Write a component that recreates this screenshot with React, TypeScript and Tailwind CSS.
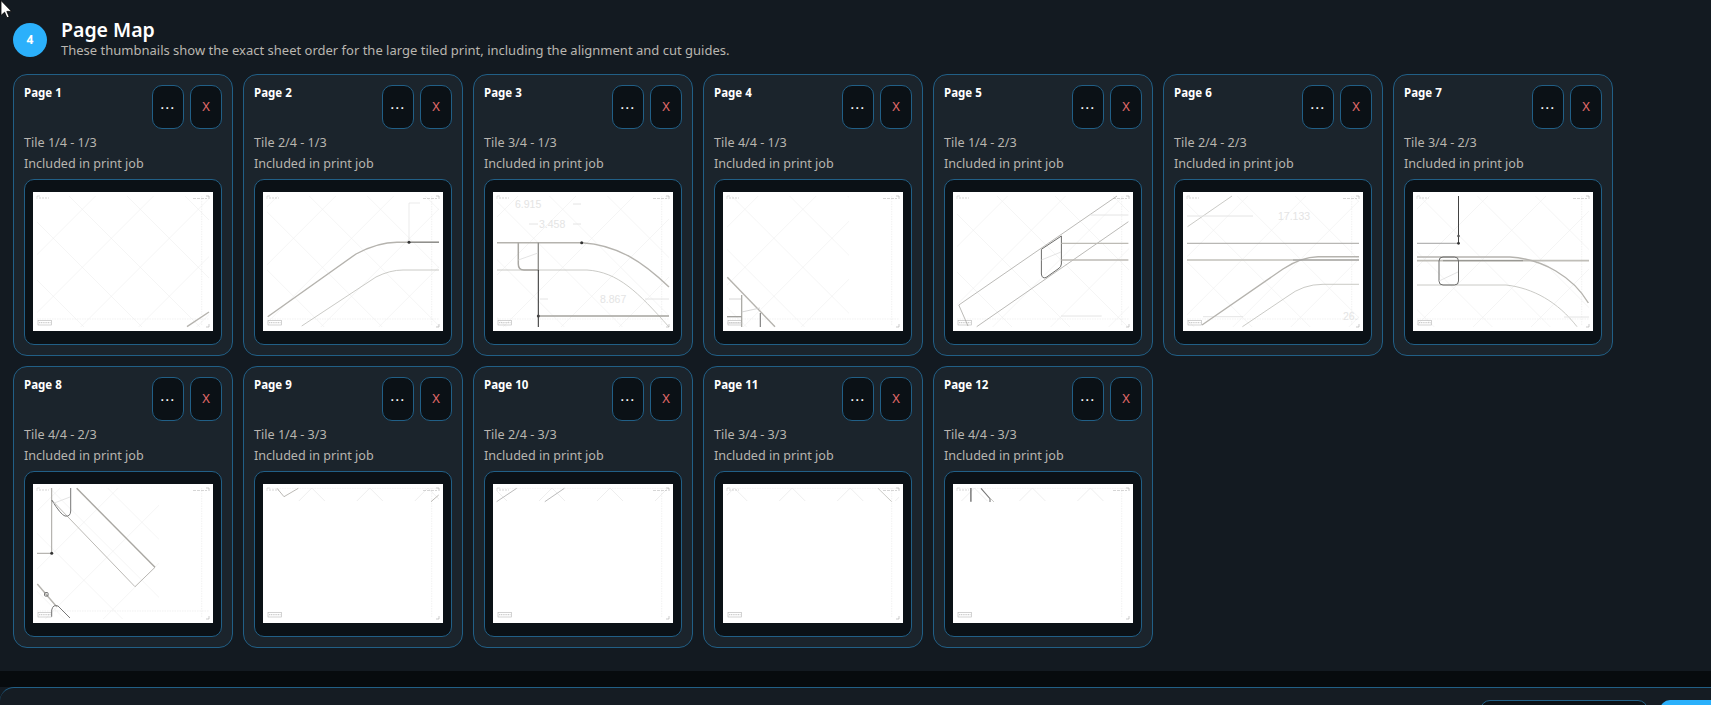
import React from 'react';

type Page = {
  tile: string;
  art: React.ReactNode;
  latticeW?: number;
  latticeH?: number;
};

const Lattice: React.FC<{ sx: number; dy: number; w: number; h: number; tone: string }> = ({ sx, dy, w, h, tone }) => {
  const offsets = [-3, -2, -1, 0, 1, 2, 3, 4];
  return (
    <svg x={4} y={4} width={w} height={h} viewBox={`4 4 ${w} ${h}`}>
      {offsets.map((k) => {
        const a = -26 + sx - dy + 58 * k;
        const b = 66.6 + sx + dy + 58 * k;
        return (
          <g key={k} stroke={tone} strokeWidth={0.6}>
            <line x1={0} y1={-a} x2={180} y2={180 - a} />
            <line x1={0} y1={b} x2={180} y2={b - 180} />
          </g>
        );
      })}
    </svg>
  );
};

const Sheet: React.FC<{ page: Page; index: number }> = ({ page, index }) => {
  const column = index < 8 ? index % 4 : (index - 8) % 4;
  const dy = index < 4 ? 0 : index < 8 ? -8 : -13.3;
  // the third row's apexes sit half a step over from the first row
  const sx = column * 10.2 - (index >= 8 ? 0.5 : 0);

  return (
    <svg viewBox="0 0 180 139" className="block h-[139px] w-[180px] bg-white">
      <Lattice
        sx={sx}
        dy={dy}
        w={page.latticeW ?? 172}
        h={page.latticeH ?? 131}
        tone={index >= 8 ? '#e2e2e2' : '#eeeeee'}
      />
      <g fill="none" stroke="#e8e8e8" strokeWidth={0.6}>
        <line x1={168.7} y1={4} x2={168.7} y2={134} strokeDasharray="1.5 1" />
        {!page.latticeH && <line x1={4} y1={127} x2={176} y2={127} strokeDasharray="1.5 1" />}
        {page.latticeH && <line x1={4} y1={4.3} x2={176} y2={4.3} strokeDasharray="1.5 1" />}
      </g>
      <g fill="none" stroke="#aaa" strokeWidth={0.6}>
        <path d="M173 4h3v3" />
        <path d="M173 135h3v-3" />
        <path d="M4 7V4h3" stroke="#ccc" />
        <rect x={5} y={128.5} width={13.5} height={4.5} stroke="#b5b5b5" />
        <line x1={6} y1={130.7} x2={17.5} y2={130.7} stroke="#999" strokeDasharray="1.2 .6" />
        <line x1={6} y1={6} x2={16} y2={6} stroke="#bbb" strokeDasharray="2 1" />
        <line x1={160} y1={6.5} x2={174} y2={6.5} stroke="#bbb" strokeDasharray="3 1" />
      </g>
      {page.art}
    </svg>
  );
};

const thick = { fill: 'none', stroke: '#b5b3ae', strokeWidth: 1.4 };
const thin = { fill: 'none', stroke: '#bdbcb8', strokeWidth: 0.8 };
const faint = { fill: 'none', stroke: '#e4e4e4', strokeWidth: 1 };
const dim = 'fill-[#e4e4e4] font-["Liberation_Sans",sans-serif] text-[10.5px]';

const pages: Page[] = [
  {
    tile: 'Tile 1/4 - 1/3',
    art: <path d="M154 134.7L176 120" {...thick} />,
  },
  {
    tile: 'Tile 2/4 - 1/3',
    art: (
      <>
        <path d="M4.7 124.7L93 62Q115 50.3 134 50.3H176" {...thick} />
        <path d="M146 50.3H176" fill="none" stroke="#8f8f8c" strokeWidth={1.3} />
        <path d="M38.7 134L113 85Q127 78 140 78H176" {...thin} />
        <path d="M157 11H146V50" fill="none" stroke="#ddd" strokeWidth={0.6} />
        <circle cx={146} cy={50.3} r={1.5} fill="#333" />
      </>
    ),
  },
  {
    tile: 'Tile 3/4 - 1/3',
    art: (
      <>
        <text x={22} y={16} className={dim}>6.915</text>
        <text x={46} y={36} className={dim}>3.458</text>
        <text x={107} y={111} className={dim}>8.867</text>
        <path d="M80 12h8M36 32H45M80 32h8M47 107h8M152 107h24" {...faint} />
        <path d="M4 50.7H89C125 53 150 70 176 95" {...thick} />
        <path d="M4 78H94C125 80 145 100 176 135" {...thin} />
        <path d="M25.3 50.7V72Q25.3 78 31 78H45.3" fill="none" stroke="#a9a7a2" strokeWidth={1.5} />
        <path d="M45.3 50.7V78" fill="none" stroke="#8b8a86" strokeWidth={1.3} />
        <path d="M45.3 78V135" fill="none" stroke="#111" strokeWidth={0.9} />
        <path d="M45.3 124H176" fill="none" stroke="#a5a39e" strokeWidth={1.3} />
        <path d="M25.3 68L45 61" {...thin} stroke="#ddd" />
        <circle cx={88.7} cy={50.7} r={1.5} fill="#333" />
        <circle cx={45.3} cy={124} r={1.5} fill="#444" />
      </>
    ),
  },
  {
    tile: 'Tile 4/4 - 1/3',
    latticeW: 122,
    art: (
      <>
        <path d="M4.3 85.3L52 134.7" {...thick} />
        <path d="M18.7 103V135" fill="none" stroke="#a5a39e" strokeWidth={1.2} />
        <path d="M37.3 121V135" fill="none" stroke="#777" strokeWidth={1.1} />
        <path d="M4 124.7H18.7" fill="none" stroke="#9c9b97" strokeWidth={1.3} />
        <path d="M4 131H18.7M18.7 120L37 116M6 107H18" {...thin} stroke="#ccc" />
      </>
    ),
  },
  {
    tile: 'Tile 1/4 - 2/3',
    art: (
      <>
        <path d="M5.8 113L164 4M23.7 134.7L175.4 29.7M5.8 113L15 134" {...thin} stroke="#a9a8a4" />
        <path d="M88.4 57.3L108.4 44V72Q108.4 75 105 77L93 85.5Q89 87 88.4 82Z" fill="none" stroke="#6d6d6b" strokeWidth={1} />
        <path d="M108.4 51.3H175.4M108.4 68H175.4" fill="none" stroke="#bdbbb5" strokeWidth={1.3} />
        <path d="M137.5 23H175.4M108 124H148.7" {...faint} />
        <path d="M88.4 68L108 60" {...thin} stroke="#ddd" />
      </>
    ),
  },
  {
    tile: 'Tile 2/4 - 2/3',
    art: (
      <>
        <text x={95} y={28} className={dim}>17.133</text>
        <text x={160} y={128} className={dim}>26.</text>
        <path d="M4.5 34.7L49 4" {...thin} />
        <path d="M4 24H70M20 124.7H60" {...faint} />
        <path d="M4 51.3H176" fill="none" stroke="#9c9b97" strokeWidth={0.9} />
        <path d="M4 68H176" fill="none" stroke="#c2c0ba" strokeWidth={1.6} />
        <path d="M19 133L100 77Q118 65 135 64.7H176" {...thick} />
        <path d="M110 68H176" fill="none" stroke="#999" strokeWidth={0.9} />
        <path d="M59.4 134.7L104 104.7Q120 92.3 140 92.3H176" {...thin} />
      </>
    ),
  },
  {
    tile: 'Tile 3/4 - 2/3',
    art: (
      <>
        <path d="M4 68.7H176" fill="none" stroke="#c0beb8" strokeWidth={1.8} />
        <path d="M30 68.7H110" fill="none" stroke="#908f8b" strokeWidth={1} />
        <path d="M4 65H97C130 67 160 85 175.4 111" {...thick} />
        <path d="M4 93H93C120 96 145 110 164 134.7" {...thin} />
        <path d="M4 51.3H45.5" fill="none" stroke="#999" strokeWidth={0.9} />
        <path d="M45.5 4V51" fill="none" stroke="#111" strokeWidth={0.8} />
        <rect x={26} y={65} width={19.5} height={28} rx={4} fill="none" stroke="#6d6d6b" strokeWidth={1} />
        <path d="M26 89L45 80" {...thin} stroke="#ddd" />
        <path d="M151 125H176" {...faint} />
        <circle cx={45.5} cy={44} r={1.3} fill="#555" />
        <circle cx={45.5} cy={51.3} r={1.4} fill="#333" />
      </>
    ),
  },
  {
    tile: 'Tile 4/4 - 2/3',
    latticeW: 122,
    art: (
      <>
        <path d="M43.7 4.3L122 83.3" fill="none" stroke="#a9a7a2" strokeWidth={1.4} />
        <path d="M18.7 16L102 102.7L122 83.3" {...thin} stroke="#a9a7a2" />
        <path d="M18.7 4V69.3M4 69.3H18.7" fill="none" stroke="#a5a39e" strokeWidth={1} />
        <path d="M37.7 4V27Q37.5 33 32 32Q28 31 18.7 16" fill="none" stroke="#777" strokeWidth={1} />
        <path d="M18.7 20L37 13" {...thin} stroke="#ddd" />
        <circle cx={18.7} cy={69.3} r={1.5} fill="#333" />
        <path d="M4.3 100L23.7 122.7" {...thick} />
        <rect x={11.5} y={108.5} width={3.6} height={3.6} rx={1} fill="none" stroke="#666" strokeWidth={0.9} />
        <path d="M18.7 132.7V126Q20 120 25 122L37 134" fill="none" stroke="#777" strokeWidth={1} />
      </>
    ),
  },
  {
    tile: 'Tile 1/4 - 3/3',
    latticeH: 13,
    art: <path d="M14 4.3L21 12.7L35.3 4.3M168 17.7L175.7 11" {...thin} stroke="#a9a7a2" />,
  },
  {
    tile: 'Tile 2/4 - 3/3',
    latticeH: 13,
    art: <path d="M3.6 17.7L23.7 4.3M51.8 17.7L71.4 4.3" fill="none" stroke="#bbb" strokeWidth={1} />,
  },
  {
    tile: 'Tile 3/4 - 3/3',
    latticeH: 13,
    art: <path d="M155 4.3L168.7 17.7" {...thin} />,
  },
  {
    tile: 'Tile 4/4 - 3/3',
    latticeH: 13,
    art: (
      <>
        <path d="M17.9 4V17.7" fill="none" stroke="#666" strokeWidth={1.3} />
        <path d="M28 4.3L37 14.7V18" fill="none" stroke="#777" strokeWidth={1.1} />
        <path d="M37 14L41 18" {...thin} />
      </>
    ),
  },
];

const PageCard: React.FC<{ page: Page; index: number }> = ({ page, index }) => (
  <div className="flex w-[220px] flex-col rounded-[14px] border border-[#215f86] bg-[#1b242c] p-[10px]">
    <div className="flex h-[44px] items-start justify-between">
      <h3 className="text-[11.5px] leading-[16px] font-bold text-white">Page {index + 1}</h3>
      <div className="flex gap-[6px]">
        <button className="h-[44px] w-[32px] rounded-[10px] border border-[#215f86] bg-[#0b1116] pb-[4px] text-[13px] font-medium tracking-[1.5px] text-white">
          ...
        </button>
        <button className="h-[44px] w-[32px] rounded-[10px] border border-[#215f86] bg-[#0b1116] pb-[1px] text-[13px] text-[#e56b6b]">
          X
        </button>
      </div>
    </div>
    <p className="mt-[3px] text-[12.6px] leading-[21px] text-[#b9b6b0]">{page.tile}</p>
    <p className="text-[12.6px] leading-[21px] text-[#b9b6b0]">Included in print job</p>
    <div className="mt-[5px] flex h-[166px] items-center justify-center rounded-[10px] border border-[#215f86] bg-[#0b1116] pb-[1px]">
      <Sheet page={page} index={index} />
    </div>
  </div>
);

const App: React.FC = () => {
  return (
    <div className='relative flex h-[705px] w-full flex-col overflow-hidden bg-[#131a21] font-["Noto_Sans",sans-serif]'>
      <svg viewBox="0 0 12 19" className="absolute top-0 left-0 z-10 h-[19px] w-[12px]">
        <path d="M1 0.5V15.5L4.6 12.2L7 17.8L9.2 16.8L6.8 11.4H11.6Z" fill="#fff" stroke="#000" strokeWidth={0.8} />
      </svg>

      <main className="flex-1 px-[13px] pt-[21px]">
        <header className="flex items-center gap-[14px]">
          <div className="flex h-[34px] w-[34px] items-center justify-center rounded-full bg-[#2bb0fb] text-[12px] font-bold text-white">
            4
          </div>
          <div className="-mt-[2px]">
            <h2 className="text-[19.5px] leading-[22px] font-semibold text-white">Page Map</h2>
            <p className="text-[13px] leading-[18px] text-[#b9b6b0]">
              These thumbnails show the exact sheet order for the large tiled print, including the alignment and cut guides.
            </p>
          </div>
        </header>
        <div className="mt-[15px] flex flex-wrap gap-[10px]">
          {pages.map((page, i) => (
            <PageCard key={page.tile} page={page} index={i} />
          ))}
        </div>
      </main>

      <div className="h-[16px] bg-[#070b0e]" />
      <footer className="flex h-[18px] shrink-0 items-start justify-end gap-[12px] rounded-tl-[14px] border-t border-[#215f86] bg-[#151c23] pt-[12px]">
        <button className="h-[44px] w-[168px] rounded-[10px] border border-[#215f86] bg-[#0b1116]" />
        <button className="h-[44px] w-[51px] rounded-l-[10px] bg-[#2bb0fb]" />
      </footer>
    </div>
  );
};

export default App;
